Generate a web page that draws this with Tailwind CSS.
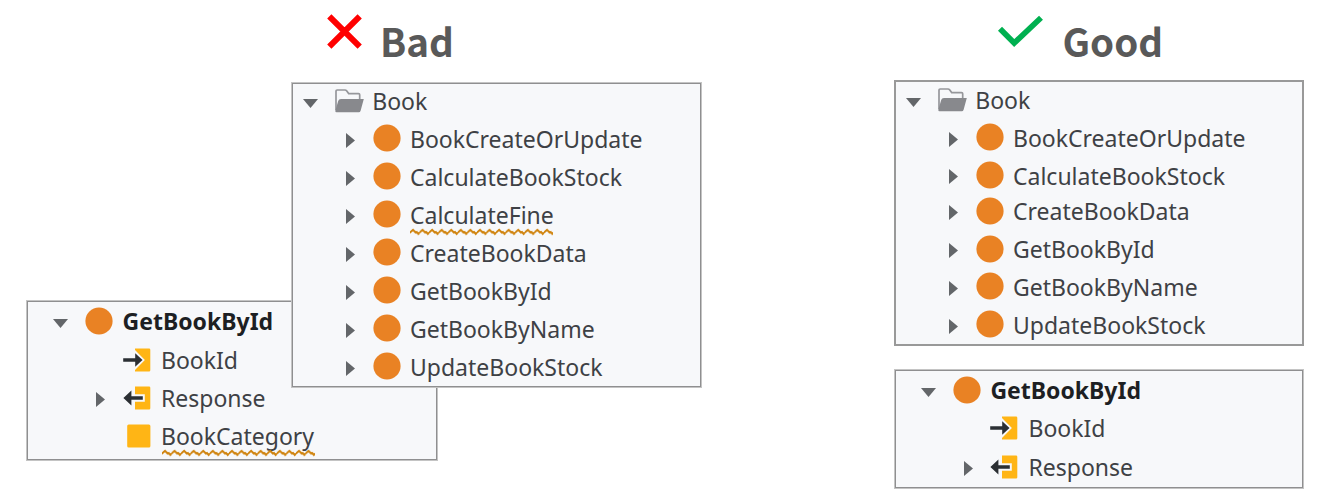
<!DOCTYPE html>
<html lang="en"><head><meta charset="utf-8"><title>Bad and good</title>
<script src="https://cdn.jsdelivr.net/npm/@tailwindcss/browser@4"></script></head>
<body class="bg-white">
<svg class="absolute h-0 w-0">
<symbol id="down" viewBox="0 0 15 9"><path d="M0 0H15L7.5 9Z" fill="#636669"/></symbol>
<symbol id="right" viewBox="0 0 9 15"><path d="M0 0L9 7.5L0 15Z" fill="#636669"/></symbol>
<symbol id="dot" viewBox="0 0 28 28"><circle cx="14" cy="14" r="13.6" fill="#e98224"/></symbol>
<symbol id="folder" viewBox="0 0 29 24"><path d="M1 21V2.200Q1 1 2.200 1H10Q11 1 11.600 1.800L13.700 4.600H23.500Q24.700 4.600 24.700 5.800V10" fill="none" stroke="#96979b" stroke-width="1.700"/><path d="M6 10H28.800L25.600 21.800Q25.200 23.300 23.800 23.300H1.500Q.2 23.300.3 21.800L3.200 12Q3.700 10 6 10Z" fill="#88898d"/></symbol>
<symbol id="in" viewBox="0 0 28 24"><path d="M12 .5H26Q27.300.5 27.300 1.800V22.200Q27.300 23.500 26 23.500H12V22L21.900 12L12 2Z" fill="#ffb515"/><path d="M.2 10.200H12.200V5.300L19.500 12L12.200 18.700V13.800H.2Z" fill="#2b2f33"/></symbol>
<symbol id="out" viewBox="0 0 28 24"><path d="M12 .5H26Q27.300.5 27.300 1.800V22.200Q27.300 23.500 26 23.500H12V15.700H21.800V8.300H12Z" fill="#ffb515"/><path d="M19.800 10.200H8.400V4.500L.4 12L8.400 19.500V13.800H19.800Z" fill="#2b2f33"/></symbol>
<symbol id="square" viewBox="0 0 28 24"><rect x="4.200" y=".5" width="23.200" height="23" rx="1.500" fill="#ffb515"/></symbol>
<pattern id="wave" width="9.570" height="8" patternUnits="userSpaceOnUse"><path d="M-1 4.500L0 4.500L3 1.800L5.600 4.500L6.700 4L8.300 6L9.570 4.500" fill="none" stroke="#d0840f" stroke-width="2"/></pattern>
</svg>
<main class="flex h-[498px] w-[1320px] overflow-hidden font-['Noto_Sans',sans-serif] text-[23px] leading-[38px] text-[#3e4145]">
<section class="w-[894px] shrink-0">
 <h1 class="flex h-[82px] pl-[327px] font-['Noto_Sans_CJK_SC',sans-serif] text-[38.6px] font-bold leading-[80px] text-[#595959]"><svg class="mt-[14px] mr-[16px] h-[35px] w-[35px]" viewBox="0 0 35 35"><path d="M2.300 2.300L32.700 32.700M32.700 2.300L2.300 32.700" stroke="#f00" stroke-width="6"/></svg><span class="pl-[2px]">Bad</span></h1>
 <div class="relative z-10 ml-[291px] h-[306px] w-[411px] border border-[#c4c4c4] bg-[#f7f8fa]"><div class="h-full border border-[#8f8f90]">
  <div class="flex h-[35px] items-center pb-[2px] pl-[10px]"><svg class="mt-[5px] h-[9px] w-[15px]"><use href="#down"/></svg><svg class="ml-[17px] h-[24px] w-[29px]"><use href="#folder"/></svg><span class="ml-[8.2px]">Book</span></div>
  <div data-leaf="BookCreateOrUpdate"></div>
  <div data-leaf="CalculateBookStock"></div>
  <div data-leaf="CalculateFine" data-wave="143"></div>
  <div data-leaf="CreateBookData"></div>
  <div data-leaf="GetBookById"></div>
  <div data-leaf="GetBookByName"></div>
  <div data-leaf="UpdateBookStock"></div>
 </div></div>
 <div class="-mt-[88px] ml-[26px] h-[161px] w-[412px] border border-[#c4c4c4] bg-[#f7f8fa]"><div class="h-full border border-[#8f8f90]">
  <div class="flex h-[38.5px] items-center pl-[25.4px]"><svg class="mt-[5px] h-[9px] w-[15px]"><use href="#down"/></svg><svg class="ml-[17px] h-[28px] w-[28px]"><use href="#dot"/></svg><b class="ml-[9.2px] font-bold text-[#1d1f23]">GetBookById</b></div>
  <div class="flex h-[38.3px] items-center pl-[94.5px]"><svg class="h-[24px] w-[28px]"><use href="#in"/></svg><span class="ml-[10.5px]">BookId</span></div>
  <div class="flex h-[38.3px] items-center pl-[68px]"><svg class="mt-[4px] h-[15px] w-[9px]"><use href="#right"/></svg><svg class="ml-[17.5px] h-[24px] w-[28px]"><use href="#out"/></svg><span class="ml-[10.5px]">Response</span></div>
  <div class="flex h-[38.3px] items-center pl-[94.5px]"><svg class="h-[24px] w-[28px]"><use href="#square"/></svg><span class="relative ml-[10.5px]">BookCategory<svg class="absolute top-[32px] left-[.5px] h-[8px] w-[153px]"><rect width="153" height="8" fill="url(#wave)"/></svg></span></div>
 </div></div>
</section>
<section class="w-[410px] shrink-0">
 <h1 class="flex h-[80px] pl-[103px] font-['Noto_Sans_CJK_SC',sans-serif] text-[38.5px] font-bold leading-[80px] text-[#595959]"><svg class="mt-[15px] mr-[19.5px] h-[33px] w-[46px]" viewBox="0 0 46 33"><path d="M3 13.800L17.200 28L44 2.700" fill="none" stroke="#00b050" stroke-width="5.700"/></svg><span>Good</span></h1>
 <div class="h-[266px] border-2 border-[#999] bg-[#f7f8fa]">
  <div class="flex h-[36.3px] items-center pb-[1px] pl-[10.2px]"><svg class="mt-[5px] h-[9px] w-[15px]"><use href="#down"/></svg><svg class="ml-[17px] h-[24px] w-[29px]"><use href="#folder"/></svg><span class="ml-[8px]">Book</span></div>
  <div data-leaf="BookCreateOrUpdate" data-tight></div>
  <div data-leaf="CalculateBookStock" data-tight></div>
  <div class="-mt-[2px]"><div data-leaf="CreateBookData" data-tight></div></div>
  <div data-leaf="GetBookById" data-tight></div>
  <div data-leaf="GetBookByName" data-tight></div>
  <div data-leaf="UpdateBookStock" data-tight></div>
 </div>
 <div class="mt-[23px] h-[120px] border border-[#c4c4c4] bg-[#f7f8fa]"><div class="h-full border border-[#8f8f90]">
  <div class="flex h-[38.3px] items-center pl-[25.4px]"><svg class="mt-[5px] h-[9px] w-[15px]"><use href="#down"/></svg><svg class="ml-[17px] h-[28px] w-[28px]"><use href="#dot"/></svg><b class="ml-[9px] font-bold text-[#1d1f23]">GetBookById</b></div>
  <div class="flex h-[38.3px] items-center pl-[94.2px]"><svg class="h-[24px] w-[28px]"><use href="#in"/></svg><span class="ml-[10.3px]">BookId</span></div>
  <div class="flex h-[38.3px] items-center pl-[68px]"><svg class="mt-[4px] h-[15px] w-[9px]"><use href="#right"/></svg><svg class="ml-[17.2px] h-[24px] w-[28px]"><use href="#out"/></svg><span class="ml-[10.3px]">Response</span></div>
 </div></div>
</section></main>
<script>
document.querySelectorAll('[data-leaf]').forEach(row => {
  const w = row.dataset.wave;
  row.className = 'tight' in row.dataset ? 'flex h-[37.8px] items-center pl-[53px]' : 'flex h-[38px] items-center pl-[53px]';
  row.innerHTML = `<svg class="mt-[4px] h-[15px] w-[9px]"><use href="#right"/></svg><svg class="ml-[18.4px] h-[28px] w-[28px]"><use href="#dot"/></svg><span class="relative mt-[1.4px] ml-[8.6px]">${row.dataset.leaf}${w ? `<svg class="absolute top-[32px] left-[.5px] h-[8px]" style="width:${w}px"><rect width="${w}" height="8" fill="url(#wave)"/></svg>` : ''}</span>`;
});
</script>
</body></html>
